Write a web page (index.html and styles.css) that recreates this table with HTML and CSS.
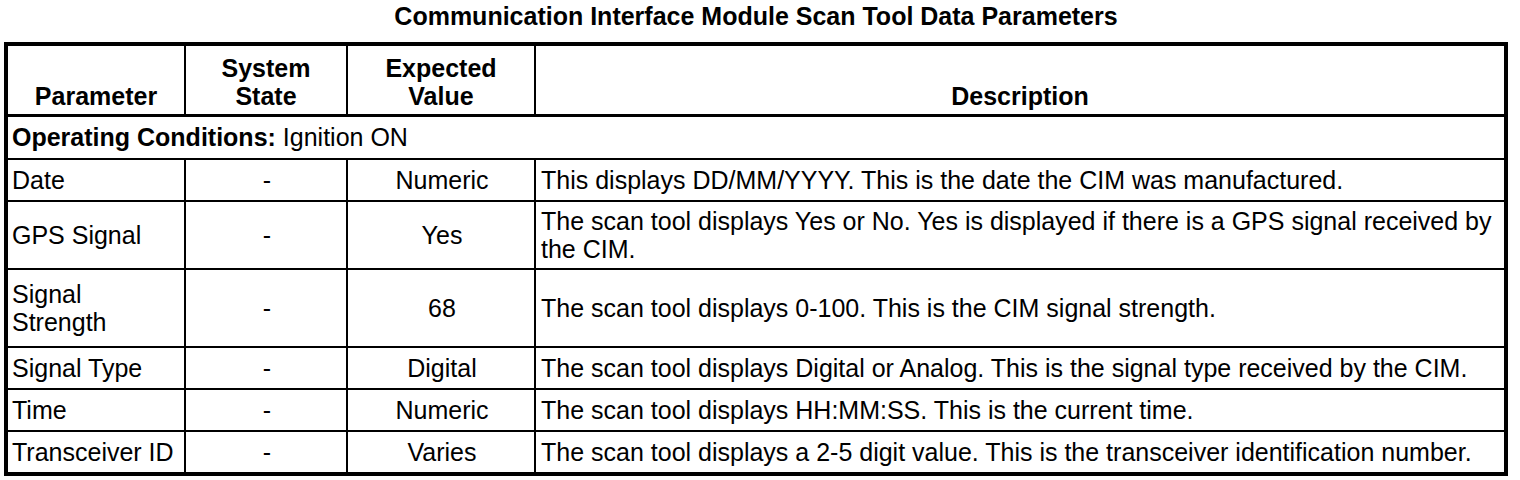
FILE: index.html
```html
<!DOCTYPE html>
<html>
<head>
<meta charset="utf-8">
<link rel="stylesheet" href="styles.css">
</head>
<body>
<div class="page">
  <h1 class="title">Communication Interface Module Scan Tool Data Parameters</h1>
  <table class="data">
    <colgroup>
      <col class="c1"><col class="c2"><col class="c3"><col class="c4">
    </colgroup>
    <thead>
      <tr>
        <th>Parameter</th>
        <th>System<br>State</th>
        <th>Expected<br>Value</th>
        <th>Description</th>
      </tr>
    </thead>
    <tbody>
      <tr class="cond">
        <td colspan="4"><b>Operating Conditions:</b> Ignition ON</td>
      </tr>
      <tr>
        <td>Date</td><td class="ctr">-</td><td class="ctr">Numeric</td>
        <td>This displays DD/MM/YYYY. This is the date the CIM was manufactured.</td>
      </tr>
      <tr class="two">
        <td>GPS Signal</td><td class="ctr">-</td><td class="ctr">Yes</td>
        <td>The scan tool displays Yes or No. Yes is displayed if there is a GPS signal received by the CIM.</td>
      </tr>
      <tr class="tall">
        <td>Signal<br>Strength</td><td class="ctr">-</td><td class="ctr">68</td>
        <td>The scan tool displays 0-100. This is the CIM signal strength.</td>
      </tr>
      <tr>
        <td>Signal Type</td><td class="ctr">-</td><td class="ctr">Digital</td>
        <td>The scan tool displays Digital or Analog. This is the signal type received by the CIM.</td>
      </tr>
      <tr>
        <td>Time</td><td class="ctr">-</td><td class="ctr">Numeric</td>
        <td>The scan tool displays HH:MM:SS. This is the current time.</td>
      </tr>
      <tr>
        <td>Transceiver ID</td><td class="ctr">-</td><td class="ctr">Varies</td>
        <td>The scan tool displays a 2-5 digit value. This is the transceiver identification number.</td>
      </tr>
    </tbody>
  </table>
</div>
</body>
</html>
```
FILE: styles.css
```css
html, body {
  margin: 0;
  padding: 0;
  background: #fff;
}
body {
  font-family: "Liberation Sans", Arial, sans-serif;
  color: #000;
}
.page {
  width: 1520px;
  padding: 2px 0 0 4px;
  box-sizing: border-box;
}
.title {
  margin: 0;
  width: 1504px;
  text-align: center;
  font-size: 25px;
  line-height: 28px;
  font-weight: bold;
  height: 40px;
}
.data {
  width: 1504px;
  border-collapse: collapse;
  table-layout: fixed;
  border: 4px solid #000;
  font-size: 25px;
  line-height: 28px;
}
.c1 { width: 179px; }
.c2 { width: 162px; }
.c3 { width: 188px; }
.c4 { width: auto; }
.data th, .data td {
  border: 2px solid #000;
  padding: 6px 3px 6px 5px;
  text-align: left;
  vertical-align: middle;
}
.data th {
  font-weight: bold;
  text-align: center;
  vertical-align: bottom;
  padding: 8px 2px 4px;
  line-height: 28px;
  border-bottom: 3px solid #000;
}
.data td:first-child {
  padding-left: 4px;
}
.data td.ctr {
  text-align: center;
}
.cond td {
  padding: 6px 4px 7px;
}
.two td {
  padding: 5px 3px 5px 5px;
}
.tall td {
  padding: 10px 3px 10px 5px;
}
```
